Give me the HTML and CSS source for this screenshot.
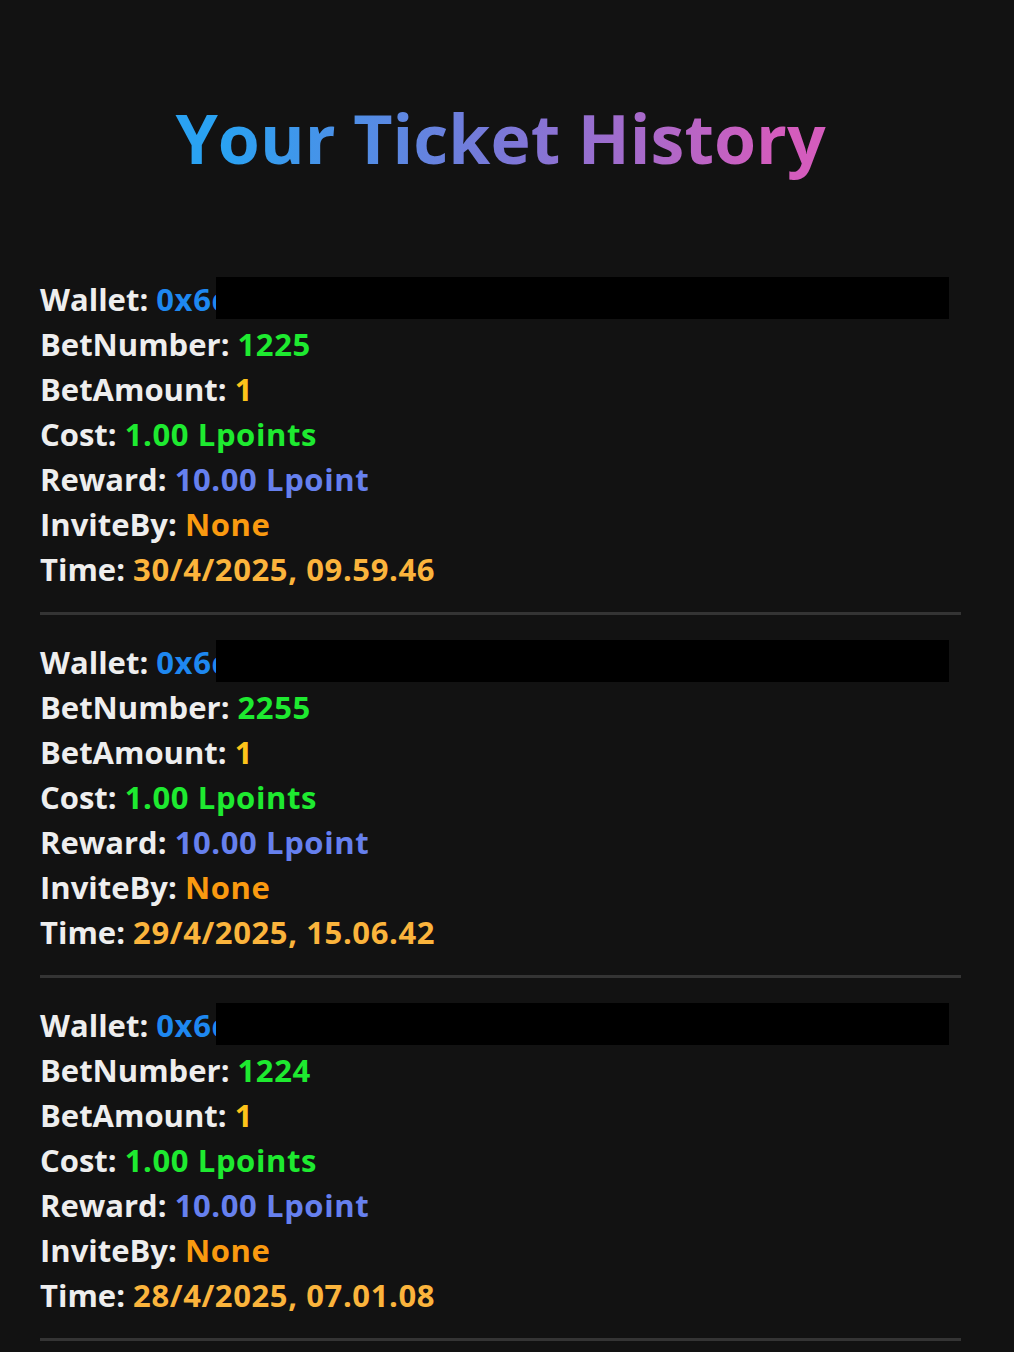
FILE: index.html
```html
<!DOCTYPE html>
<html lang="en">
<head>
<meta charset="utf-8">
<title>Your Ticket History</title>
<link rel="stylesheet" href="styles.css">
</head>
<body>
<main class="page">
  <h1 class="title">Your Ticket History</h1>
  <section class="list">
    <article class="ticket">
      <div class="row wallet-row"><span class="label">Wallet:</span> <span class="v-wallet">0x6d</span><span class="redact"></span></div>
      <div class="row"><span class="label">BetNumber:</span> <span class="v-green">1225</span></div>
      <div class="row"><span class="label">BetAmount:</span> <span class="v-yellow">1</span></div>
      <div class="row"><span class="label">Cost:</span> <span class="v-green">1.00 Lpoints</span></div>
      <div class="row"><span class="label">Reward:</span> <span class="v-blue">10.00 Lpoint</span></div>
      <div class="row"><span class="label">InviteBy:</span> <span class="v-orange">None</span></div>
      <div class="row"><span class="label">Time:</span> <span class="v-time">30/4/2025, 09.59.46</span></div>
    </article>
    <article class="ticket">
      <div class="row wallet-row"><span class="label">Wallet:</span> <span class="v-wallet">0x6d</span><span class="redact"></span></div>
      <div class="row"><span class="label">BetNumber:</span> <span class="v-green">2255</span></div>
      <div class="row"><span class="label">BetAmount:</span> <span class="v-yellow">1</span></div>
      <div class="row"><span class="label">Cost:</span> <span class="v-green">1.00 Lpoints</span></div>
      <div class="row"><span class="label">Reward:</span> <span class="v-blue">10.00 Lpoint</span></div>
      <div class="row"><span class="label">InviteBy:</span> <span class="v-orange">None</span></div>
      <div class="row"><span class="label">Time:</span> <span class="v-time">29/4/2025, 15.06.42</span></div>
    </article>
    <article class="ticket">
      <div class="row wallet-row"><span class="label">Wallet:</span> <span class="v-wallet">0x6d</span><span class="redact"></span></div>
      <div class="row"><span class="label">BetNumber:</span> <span class="v-green">1224</span></div>
      <div class="row"><span class="label">BetAmount:</span> <span class="v-yellow">1</span></div>
      <div class="row"><span class="label">Cost:</span> <span class="v-green">1.00 Lpoints</span></div>
      <div class="row"><span class="label">Reward:</span> <span class="v-blue">10.00 Lpoint</span></div>
      <div class="row"><span class="label">InviteBy:</span> <span class="v-orange">None</span></div>
      <div class="row"><span class="label">Time:</span> <span class="v-time">28/4/2025, 07.01.08</span></div>
    </article>
  </section>
</main>
</body>
</html>
```
FILE: styles.css
```css
html, body {
  margin: 0;
  padding: 0;
  background: #121212;
}
body {
  font-family: "Open Sans", "Noto Sans", "DejaVu Sans", sans-serif;
  color: #eeeeee;
}
.page {
  width: 921px;
  padding: 0 0 0 40px;
}
.title {
  margin: 0;
  padding-top: 97px;
  height: 180px;
  box-sizing: border-box;
  text-align: center;
  font-size: 68px;
  line-height: 82px;
  font-weight: 700;
  background: linear-gradient(90deg, #2aa2f2 20%, #7a78d8 50%, #d45cbd 80%);
  -webkit-background-clip: text;
  background-clip: text;
  color: transparent;
}
.list {
  display: flex;
  flex-direction: column;
  padding-top: 97px;
}
.ticket {
  display: flex;
  flex-direction: column;
  padding-bottom: 20px;
  margin-bottom: 25px;
  border-bottom: 3px solid #343434;
}
.row {
  font-size: 31px;
  line-height: 45px;
  font-weight: 700;
  white-space: nowrap;
}
.label { color: #eeeeee; }
.row > span:not(.label) { letter-spacing: 0.6px; }
.wallet-row { position: relative; }
.redact {
  position: absolute;
  left: 176px;
  top: 0;
  width: 733px;
  height: 42px;
  background: #000;
}
.v-wallet { color: #1e88f0; }
.v-green { color: #1eea30; }
.v-yellow { color: #fdc31a; }
.v-blue { color: #6680ee; }
.v-orange { color: #fa9a10; }
.v-time { color: #fbb43c; }
```
